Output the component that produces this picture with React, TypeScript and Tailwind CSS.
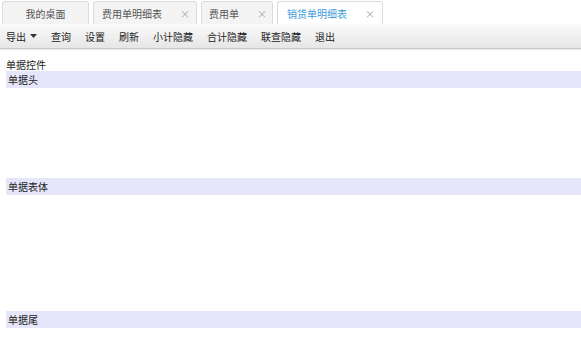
import React from "react";

const font = { fontFamily: '"Noto Sans CJK SC", "Liberation Sans", sans-serif' };

type Tab = { title: string; width: string; closable: boolean; active?: boolean };

const tabs: Tab[] = [
  { title: "我的桌面", width: "w-[87px]", closable: false },
  { title: "费用单明细表", width: "w-[104px]", closable: true },
  { title: "费用单", width: "w-[72px]", closable: true },
  { title: "销货单明细表", width: "w-[106px]", closable: true, active: true },
];

const tools = ["查询", "设置", "刷新", "小计隐藏", "合计隐藏", "联查隐藏", "退出"];

function Section({ title }: { title: string }) {
  return (
    <div className="h-[17px] bg-[#e6e6fa] pl-[2px] text-[10px] leading-[17px] text-[#222]">
      {title}
    </div>
  );
}

export default function App() {
  return (
    <div className="h-[363px] w-[581px] overflow-hidden bg-white" style={font}>
      {/* tab strip */}
      <div className="flex h-[24px] items-end gap-[4px] pl-[2px]">
        {tabs.map((t) => (
          <div
            key={t.title}
            className={`flex h-[23px] ${t.width} items-center justify-center gap-[18px] rounded-t-[3px] border border-b-0 border-[#dcdcdc] text-[10px] ${
              t.active ? "bg-white text-[#3d9bd8]" : "bg-[#f4f4f4] text-[#555]"
            } ${t.closable ? "pl-[2px]" : ""}`}
          >
            <span>{t.title}</span>
            {t.closable && <span className="text-[10px] text-[#aaa]">×</span>}
          </div>
        ))}
      </div>

      {/* toolbar */}
      <div className="flex h-[25px] items-center gap-[14px] border-b border-[#c8c8c8] bg-gradient-to-b from-[#fbfbfb] to-[#e6e6e6] pl-[6px] text-[10px] text-[#222]">
        <span className="flex items-center gap-[4px]">
          导出
          <svg width="7" height="4" viewBox="0 0 7 4">
            <path d="M0 0h7L3.5 4z" fill="#333" />
          </svg>
        </span>
        {tools.map((t) => (
          <span key={t}>{t}</span>
        ))}
      </div>
      <div className="h-[2px] bg-gradient-to-b from-[#ececec] to-white" />

      {/* body */}
      <div className="flex flex-col pl-[6px]">
        <div className="mt-[7px] h-[13px] text-[10px] leading-[13px] text-[#222]">单据控件</div>
        <Section title="单据头" />
        <div className="h-[90px]" />
        <Section title="单据表体" />
        <div className="h-[116px]" />
        <Section title="单据尾" />
      </div>
    </div>
  );
}
